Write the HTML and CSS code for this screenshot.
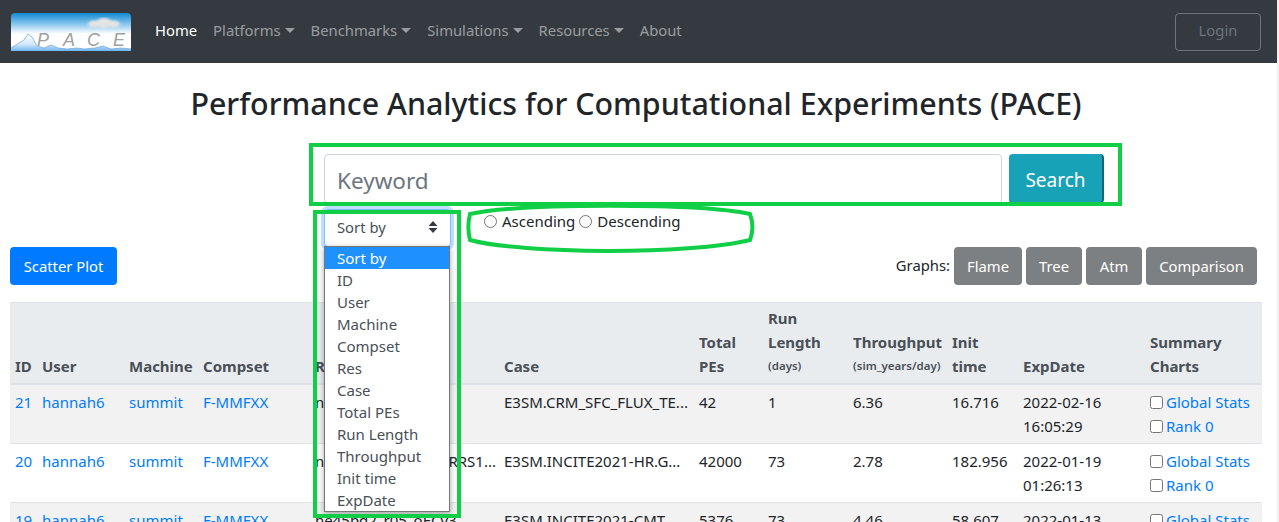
FILE: index.html
```html
<!DOCTYPE html>
<html lang="en">

<head>
    <meta charset="UTF-8">
    <title>PACE</title>
    <link rel="stylesheet" href="styles.css">
</head>

<body>
    <div class="page">
        <nav class="navbar">
            <a class="brand" href="#">
                <svg class="logo" width="120" height="38" viewBox="0 0 120 38">
                    <defs>
                        <linearGradient id="sky" x1="0" y1="0" x2="0" y2="1">
                            <stop offset="0" stop-color="#1189d3"></stop>
                            <stop offset="0.3" stop-color="#8cc8ee"></stop>
                            <stop offset="0.55" stop-color="#ffffff"></stop>
                        </linearGradient>
                        <linearGradient id="water" gradientUnits="userSpaceOnUse" x1="0" y1="21" x2="0" y2="38">
                            <stop offset="0" stop-color="#ffffff"></stop>
                            <stop offset="0.6" stop-color="#d3e9fc"></stop>
                            <stop offset="1" stop-color="#6fb4f2"></stop>
                        </linearGradient>
                        <filter id="soft"><feGaussianBlur stdDeviation="1"></feGaussianBlur></filter>
                    </defs>
                    <rect width="120" height="38" rx="4" fill="url(#sky)"></rect>
                    <g fill="#e4e4e4" filter="url(#soft)">
                        <ellipse cx="84" cy="11" rx="7" ry="3.5"></ellipse>
                        <ellipse cx="93" cy="10" rx="8" ry="5"></ellipse>
                        <ellipse cx="102" cy="11" rx="7" ry="3.5"></ellipse>
                    </g>
                    <path d="M0 35 L8 30 L13 27 L17 21 L21 24 L26 33 L33 35 L40 32 L47 35 L56 36 L66 35 L73 36 L84 35 L92 33 L100 36 L110 35 L120 36 V38 H0 Z" fill="url(#water)"></path>
                    <path d="M0 35 L8 30 L13 27 L17 21 L21 24 L26 33 L33 35 L40 32 L47 35 L56 36 L66 35 L73 36 L84 35 L92 33 L100 36 L110 35 L120 36" fill="none" stroke="#6aa5dc" stroke-width="0.7"></path>
                    <text class="logo-text" x="26" y="33">P</text>
                    <text class="logo-text" x="52" y="33">A</text>
                    <text class="logo-text" x="76" y="33">C</text>
                    <text class="logo-text" x="102" y="33">E</text>
                </svg>
            </a>
            <ul class="nav-links">
                <li><a class="nav-link active" href="#">Home</a></li>
                <li><a class="nav-link caret" href="#">Platforms</a></li>
                <li><a class="nav-link caret" href="#">Benchmarks</a></li>
                <li><a class="nav-link caret" href="#">Simulations</a></li>
                <li><a class="nav-link caret" href="#">Resources</a></li>
                <li><a class="nav-link" href="#">About</a></li>
            </ul>
            <button class="login-btn" type="button">Login</button>
        </nav>

        <h1 class="title">Performance Analytics for Computational Experiments (PACE)</h1>

        <form class="search-form">
            <input class="keyword" type="text" placeholder="Keyword">
            <button class="search-btn" type="button">Search</button>
        </form>

        <div class="sort-row">
            <div class="sort-select">
                <span>Sort by</span>
                <svg width="10" height="14" viewBox="0 0 10 14">
                    <path d="M5 1 L9.5 6 H0.5 Z M5 13 L0.5 8 H9.5 Z" fill="#343a40"></path>
                </svg>
            </div>
            <label class="radio-label"><input type="radio" name="order"> Ascending</label>
            <label class="radio-label"><input type="radio" name="order"> Descending</label>
        </div>

        <div class="toolbar">
            <button class="btn btn-primary" type="button">Scatter Plot</button>
            <div class="graphs">
                <span class="graphs-label">Graphs:</span>
                <button class="btn btn-grey btn-flame" type="button">Flame</button>
                <button class="btn btn-grey btn-short" type="button">Tree</button>
                <button class="btn btn-grey btn-short" type="button">Atm</button>
                <button class="btn btn-grey btn-compare" type="button">Comparison</button>
            </div>
        </div>

        <table class="exp-table">
            <colgroup>
                <col class="col-id">
                <col class="col-user">
                <col class="col-machine">
                <col class="col-compset">
                <col class="col-res">
                <col class="col-case">
                <col class="col-pes">
                <col class="col-run">
                <col class="col-through">
                <col class="col-init">
                <col class="col-date">
                <col class="col-charts">
            </colgroup>
            <thead>
                <tr>
                    <th>ID</th>
                    <th>User</th>
                    <th>Machine</th>
                    <th>Compset</th>
                    <th>Res</th>
                    <th>Case</th>
                    <th>Total PEs</th>
                    <th>Run Length <small>(days)</small></th>
                    <th>Throughput <small>(sim_years/day)</small></th>
                    <th>Init time</th>
                    <th>ExpDate</th>
                    <th>Summary Charts</th>
                </tr>
            </thead>
            <tbody>
                <tr>
                    <td><a href="#">21</a></td>
                    <td><a href="#">hannah6</a></td>
                    <td><a href="#">summit</a></td>
                    <td><a href="#">F-MMFXX</a></td>
                    <td>ne4pg2_ne4pg2</td>
                    <td>E3SM.CRM_SFC_FLUX_TE...</td>
                    <td>42</td>
                    <td>1</td>
                    <td>6.36</td>
                    <td>16.716</td>
                    <td>2022-02-16 16:05:29</td>
                    <td>
                        <label class="chart-check"><input type="checkbox"> <a href="#">Global Stats</a></label>
                        <label class="chart-check"><input type="checkbox"> <a href="#">Rank 0</a></label>
                    </td>
                </tr>
                <tr>
                    <td><a href="#">20</a></td>
                    <td><a href="#">hannah6</a></td>
                    <td><a href="#">summit</a></td>
                    <td><a href="#">F-MMFXX</a></td>
                    <td>ne1024pg2_r025_oRRS1...</td>
                    <td>E3SM.INCITE2021-HR.G...</td>
                    <td>42000</td>
                    <td>73</td>
                    <td>2.78</td>
                    <td>182.956</td>
                    <td>2022-01-19 01:26:13</td>
                    <td>
                        <label class="chart-check"><input type="checkbox"> <a href="#">Global Stats</a></label>
                        <label class="chart-check"><input type="checkbox"> <a href="#">Rank 0</a></label>
                    </td>
                </tr>
                <tr>
                    <td><a href="#">19</a></td>
                    <td><a href="#">hannah6</a></td>
                    <td><a href="#">summit</a></td>
                    <td><a href="#">F-MMFXX</a></td>
                    <td>ne45pg2_r05_oECv3</td>
                    <td>E3SM.INCITE2021-CMT...</td>
                    <td>5376</td>
                    <td>73</td>
                    <td>4.46</td>
                    <td>58.607</td>
                    <td>2022-01-13 03:11:40</td>
                    <td>
                        <label class="chart-check"><input type="checkbox"> <a href="#">Global Stats</a></label>
                        <label class="chart-check"><input type="checkbox"> <a href="#">Rank 0</a></label>
                    </td>
                </tr>
            </tbody>
        </table>

        <!-- open select list, sits over the table -->
        <ul class="sort-list">
            <li class="selected">Sort by</li>
            <li>ID</li>
            <li>User</li>
            <li>Machine</li>
            <li>Compset</li>
            <li>Res</li>
            <li>Case</li>
            <li>Total PEs</li>
            <li>Run Length</li>
            <li>Throughput</li>
            <li>Init time</li>
            <li>ExpDate</li>
        </ul>

        <!-- green marks drawn on top of the screenshot -->
        <svg class="marks" width="1279" height="522" viewBox="0 0 1279 522">
            <rect x="311" y="145" width="809" height="59"></rect>
            <rect x="315" y="212" width="144" height="304"></rect>
            <path d="M470 214 C520 203 700 203 750 214 C753 222 753 232 750 240 C690 255 520 254 470 240 C468 232 468 222 470 214 Z"></path>
        </svg>
    </div>
</body>

</html>
```

FILE: styles.css
```css
html,
body {
    height: 100%;
}

body {
    margin: 0;
    overflow: hidden;
    background-color: #f1f1f1;
    font-family: "Noto Sans", "Open Sans", sans-serif;
    font-size: 14.8px;
    line-height: 24px;
    color: #212529;
}

a {
    text-decoration: none;
    color: #007bff;
}

.page {
    position: relative;
    width: 1277px;
    height: 522px;
    overflow: hidden;
    background-color: #fff;
}

.navbar {
    display: flex;
    align-items: center;
    height: 63px;
    padding: 0 16px 0 11px;
    box-sizing: border-box;
    background-color: #343a40;
}

.brand {
    display: flex;
    margin-right: 16px;
}

.logo-text {
    font-family: "Liberation Sans", sans-serif;
    font-size: 18px;
    font-style: italic;
    fill: #a0a0a0;
}

.nav-links {
    display: flex;
    flex: 1;
    margin: 0;
    padding: 0;
    list-style: none;
}

.nav-link {
    display: block;
    padding: 6px 8px 10px;
    font-size: 14.8px;
    color: rgba(255, 255, 255, 0.5);
}

.nav-link.active {
    color: #fff;
}

.caret::after {
    content: "";
    display: inline-block;
    margin-left: 4px;
    vertical-align: 3px;
    border-top: 5px solid;
    border-left: 5px solid transparent;
    border-right: 5px solid transparent;
}

.login-btn {
    width: 86px;
    height: 38px;
    padding: 0 0 3px;
    font: inherit;
    color: #6c757d;
    background: transparent;
    border: 1px solid #6c757d;
    border-radius: 4px;
}

.title {
    margin: 19px 5px 0 0;
    font-size: 30.4px;
    font-weight: 500;
    line-height: 44px;
    text-align: center;
}

.search-form {
    display: flex;
    gap: 7px;
    align-items: flex-start;
    height: 50px;
    margin: 28px 0 0 324px;
}

.keyword {
    width: 678px;
    height: 50px;
    padding: 2px 12px 0;
    box-sizing: border-box;
    font: inherit;
    font-size: 22.5px;
    color: #495057;
    border: 1px solid #ced4da;
    border-radius: 4px;
}

.keyword::placeholder {
    color: #6c757d;
    opacity: 1;
}

.search-btn {
    width: 95px;
    height: 49px;
    padding: 3px 0 0;
    font: inherit;
    font-size: 19px;
    color: #fff;
    background-color: #17a2b8;
    border: none;
    border-right: 2px solid #0f6675;
    border-bottom: 1px solid #0f6675;
    border-radius: 4px;
}

.sort-row {
    display: flex;
    align-items: flex-start;
    gap: 4px;
    height: 38px;
    margin: 5px 0 0 324px;
}

.sort-select {
    display: flex;
    align-items: center;
    justify-content: space-between;
    width: 127px;
    height: 38px;
    margin-right: 29px;
    padding: 0 12px 2px;
    box-sizing: border-box;
    color: #495057;
    background-color: #fff;
    border: 1px solid #80bdff;
    border-radius: 4px;
    box-shadow: 0 0 0 3px rgba(0, 123, 255, 0.25);
}

.radio-label {
    display: flex;
    align-items: center;
    gap: 5px;
    font-size: 15px;
}

.radio-label input {
    width: 13px;
    height: 13px;
    margin: 0;
}

.toolbar {
    display: flex;
    align-items: center;
    justify-content: space-between;
    height: 38px;
    padding: 0 20px 0 10px;
}

.graphs {
    display: flex;
    align-items: center;
    gap: 4px;
}

.graphs-label {
    margin: 0 0 3px;
}

.btn {
    height: 38px;
    padding: 0 12px;
    font: inherit;
    color: #fff;
    border: none;
    border-radius: 4px;
}

.btn-primary {
    width: 107px;
    background-color: #007bff;
}

.btn-grey {
    padding: 0;
    background-color: #7d8082;
}

.btn-flame {
    width: 68px;
}

.btn-short {
    width: 56px;
}

.btn-compare {
    width: 111px;
}

.exp-table {
    width: 1252px;
    margin: 17px 0 0 10px;
    table-layout: fixed;
    border-collapse: collapse;
    font-size: 15px;
}

.exp-table th,
.exp-table td {
    padding: 5px;
    text-align: left;
    vertical-align: top;
    border-top: 1px solid #dee2e6;
}

.exp-table th {
    padding: 3px 5px 5px;
    font-weight: 700;
    vertical-align: bottom;
    color: #495057;
    background-color: #e9ecef;
    border-bottom: 2px solid #dee2e6;
}

.exp-table small {
    display: block;
    font-size: 11.5px;
    font-weight: 600;
}

.exp-table tbody tr:nth-child(odd) {
    background-color: #f2f2f2;
}

.exp-table td:nth-child(5),
.exp-table td:nth-child(6) {
    white-space: nowrap;
    overflow: hidden;
}

.col-id { width: 27px; }
.col-user { width: 87px; }
.col-machine { width: 74px; }
.col-compset { width: 112px; }
.col-res { width: 189px; }
.col-case { width: 195px; }
.col-pes { width: 69px; }
.col-run { width: 85px; }
.col-through { width: 99px; }
.col-init { width: 71px; }
.col-date { width: 127px; }
.col-charts { width: 117px; }

.chart-check {
    display: flex;
    align-items: center;
    gap: 3px;
}

.chart-check input {
    width: 13px;
    height: 13px;
    margin: 0;
}

.sort-list {
    position: absolute;
    left: 324px;
    top: 246px;
    width: 126px;
    margin: 0;
    padding: 0;
    box-sizing: border-box;
    list-style: none;
    font-size: 15px;
    line-height: 22px;
    color: #495057;
    background-color: #fff;
    border: 1px solid #767676;
    box-shadow: 0 2px 6px rgba(0, 0, 0, 0.35);
}

.sort-list li {
    padding-left: 12px;
}

.sort-list .selected {
    color: #fff;
    background-color: #1e90ff;
}

.marks {
    position: absolute;
    left: 0;
    top: 0;
    pointer-events: none;
}

.marks rect,
.marks path {
    fill: none;
    stroke: #10cf47;
    stroke-width: 4;
}
```
